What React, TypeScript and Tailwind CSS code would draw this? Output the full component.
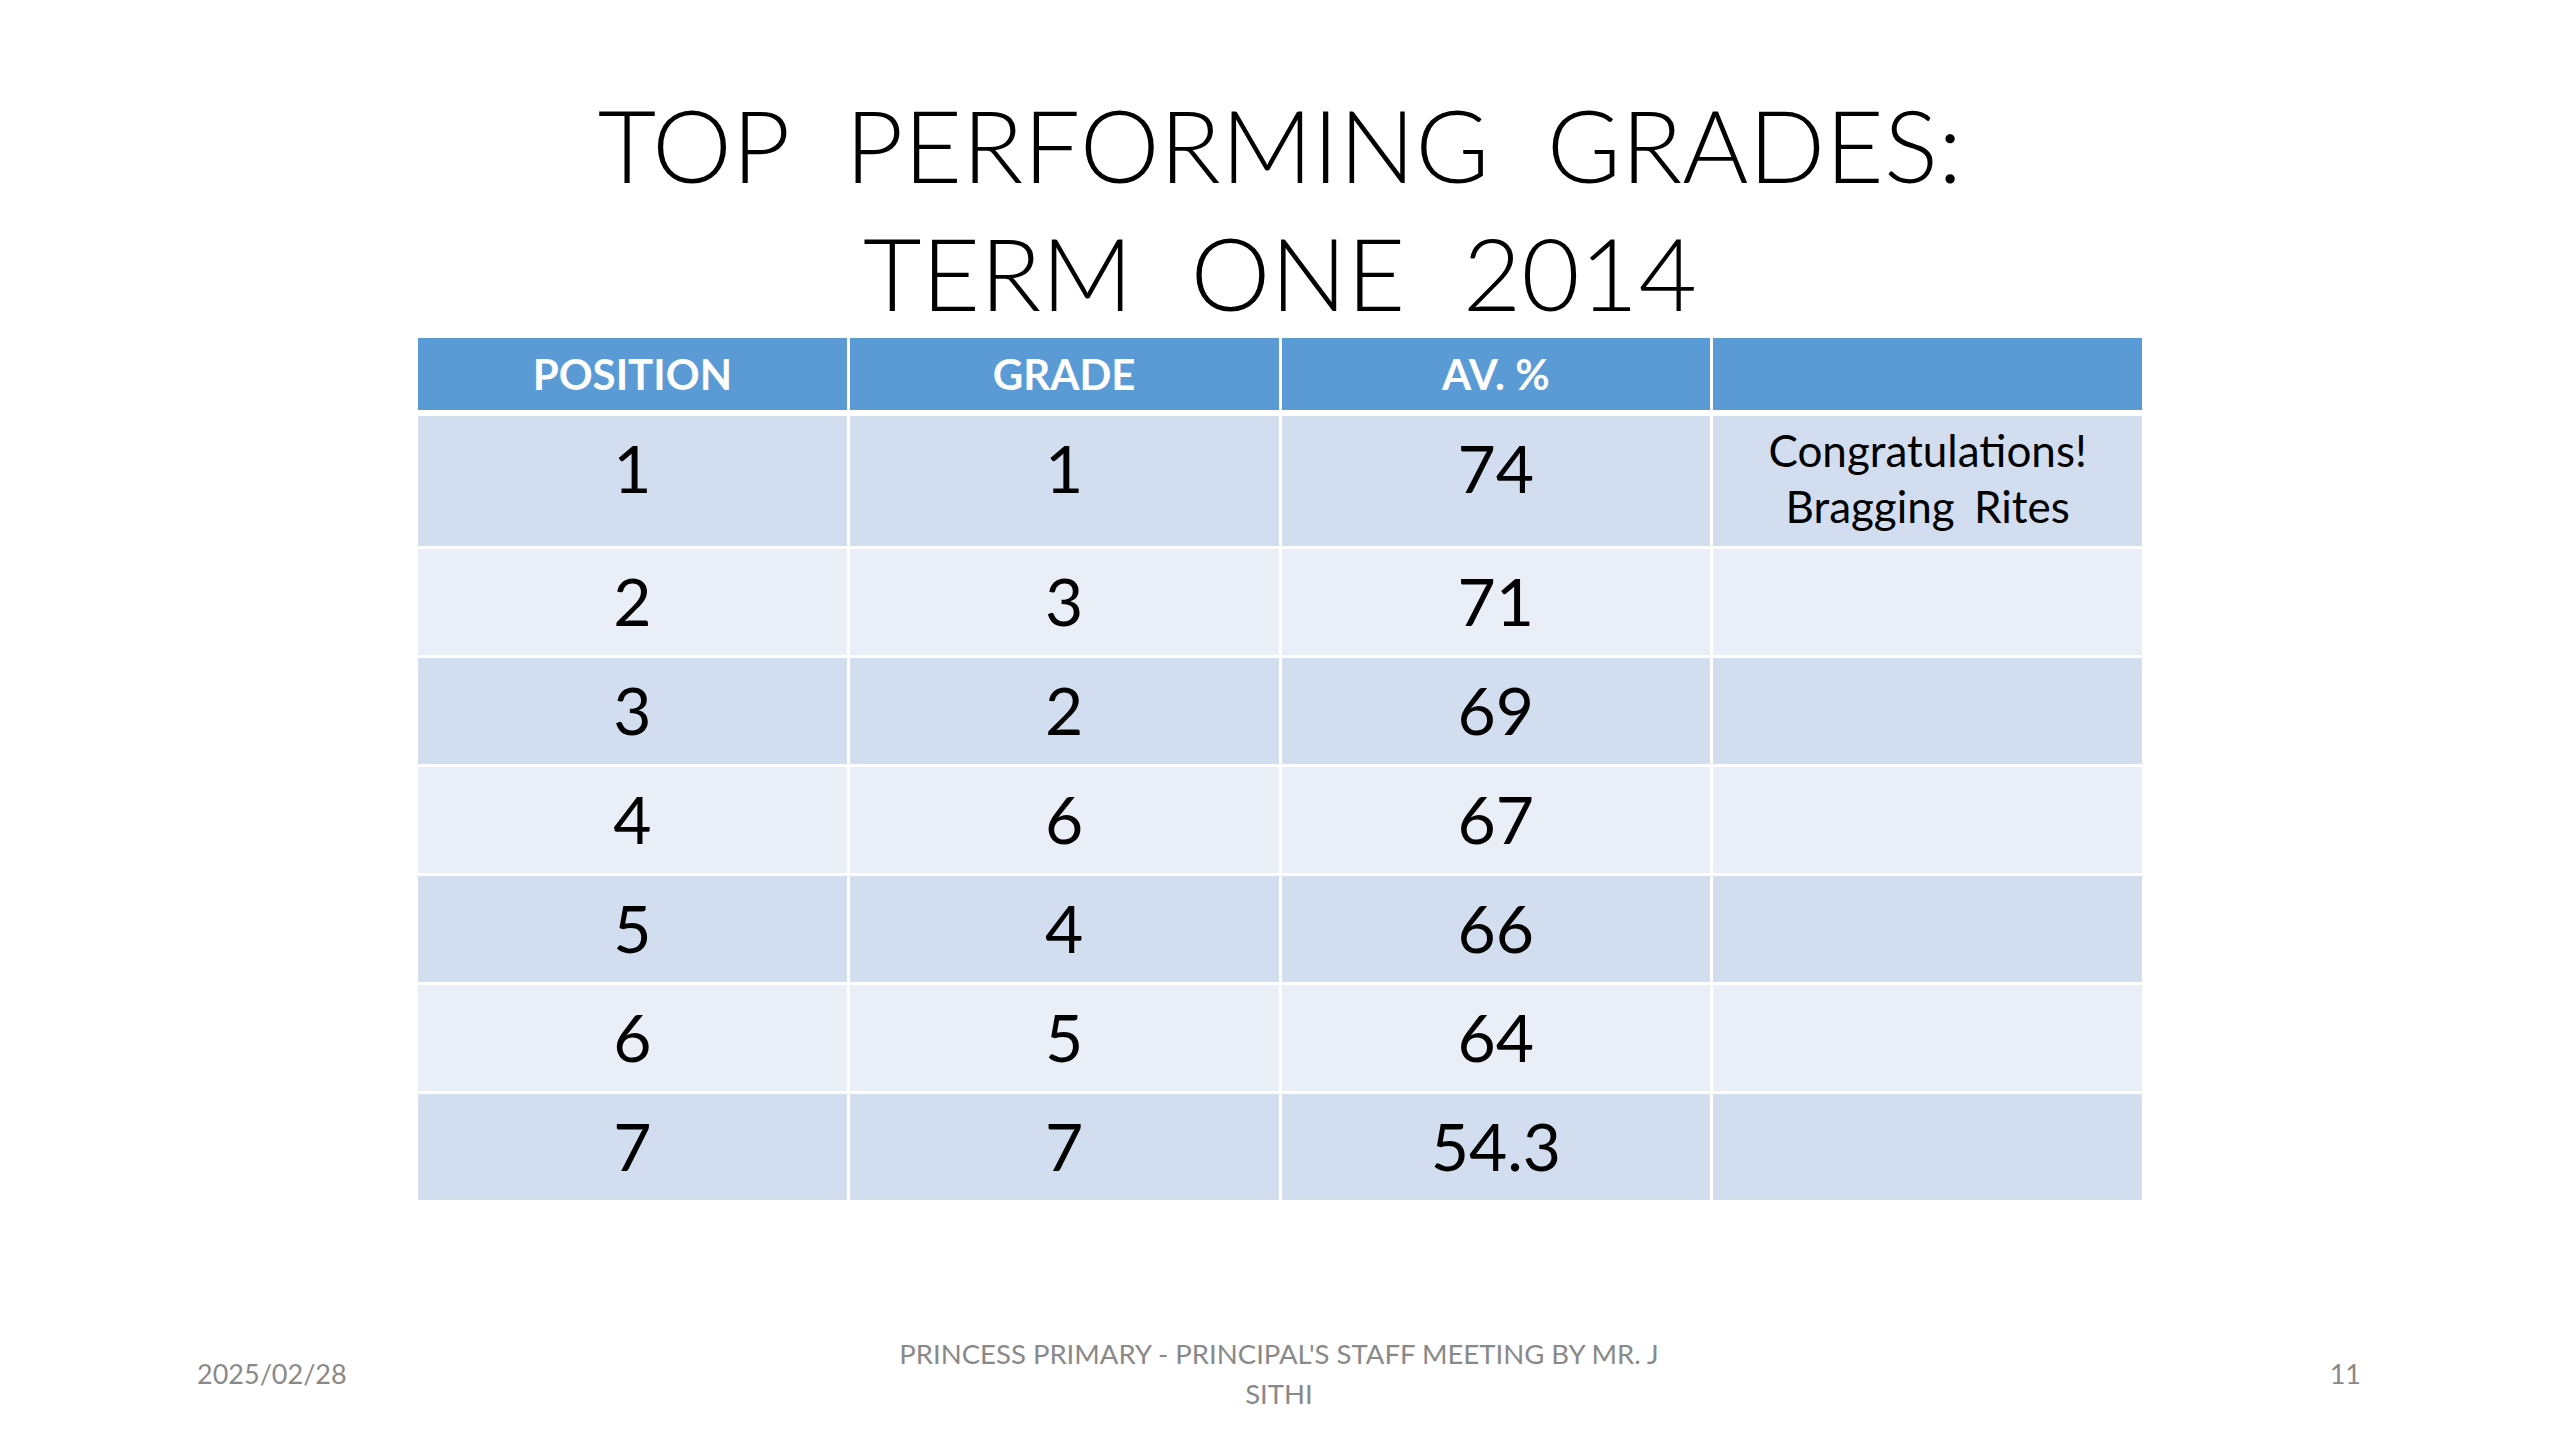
import React from 'react';

const rows = [
  { pos: '1', grade: '1', avg: '74', note: true },
  { pos: '2', grade: '3', avg: '71' },
  { pos: '3', grade: '2', avg: '69' },
  { pos: '4', grade: '6', avg: '67' },
  { pos: '5', grade: '4', avg: '66' },
  { pos: '6', grade: '5', avg: '64' },
  { pos: '7', grade: '7', avg: '54.3' },
];

export default function App() {
  return (
    <div className="w-[2560px] h-[1440px] bg-white overflow-hidden font-['Lato',sans-serif] text-black">
      <h1 className="pt-[80px] text-center font-light text-[101px] leading-[128px] [word-spacing:30px]">
        <span className="block">TOP PERFORMING GRADES:</span>
        <span className="block">TERM ONE 2014</span>
      </h1>

      <div className="mt-[2px] mx-auto w-[1724px]">
        <div className="grid grid-cols-4 gap-x-[3px] h-[72px]">
          {['POSITION', 'GRADE', 'AV. %', ''].map((h, i) => (
            <div key={i} className="bg-[#5b9bd5] flex items-center justify-center text-white font-bold text-[42px]">
              {h}
            </div>
          ))}
        </div>

        <div className="mt-[6px] flex flex-col gap-y-[3px]">
          {rows.map((r, i) => (
            <Row key={i} {...r} striped={i % 2 === 1} />
          ))}
        </div>
      </div>

      <footer className="mt-[134px] grid grid-cols-[1fr_auto_1fr] items-center pl-[197px] pr-[199px] text-[#898989] text-[27px]">
        <div>2025/02/28</div>
        <div className="text-center leading-[40px] text-[27.5px] whitespace-nowrap">
          <span className="block">PRINCESS PRIMARY - PRINCIPAL'S STAFF MEETING BY MR. J</span>
          <span className="block">SITHI</span>
        </div>
        <div className="text-right">11</div>
      </footer>
    </div>
  );
}

function Row({ pos, grade, avg, note, striped }: { pos: string; grade: string; avg: string; note?: boolean; striped: boolean }) {
  const bg = striped ? 'bg-[#eaeff7]' : 'bg-[#d2deef]';
  return (
    <div className={`grid grid-cols-4 gap-x-[3px] ${note ? 'h-[130px]' : 'h-[106px]'}`}>
      {[pos, grade, avg].map((v, j) => (
        <div key={j} className={`${bg} text-center text-[66px] leading-[66px] pt-[19px]`}>
          {v}
        </div>
      ))}
      <div className={`${bg} text-center text-[44px] leading-[56px] pt-[6px] [word-spacing:8px]`}>
        {note && (
          <>
            <span className="block">Congratulations!</span>
            <span className="block">Bragging Rites</span>
          </>
        )}
      </div>
    </div>
  );
}
